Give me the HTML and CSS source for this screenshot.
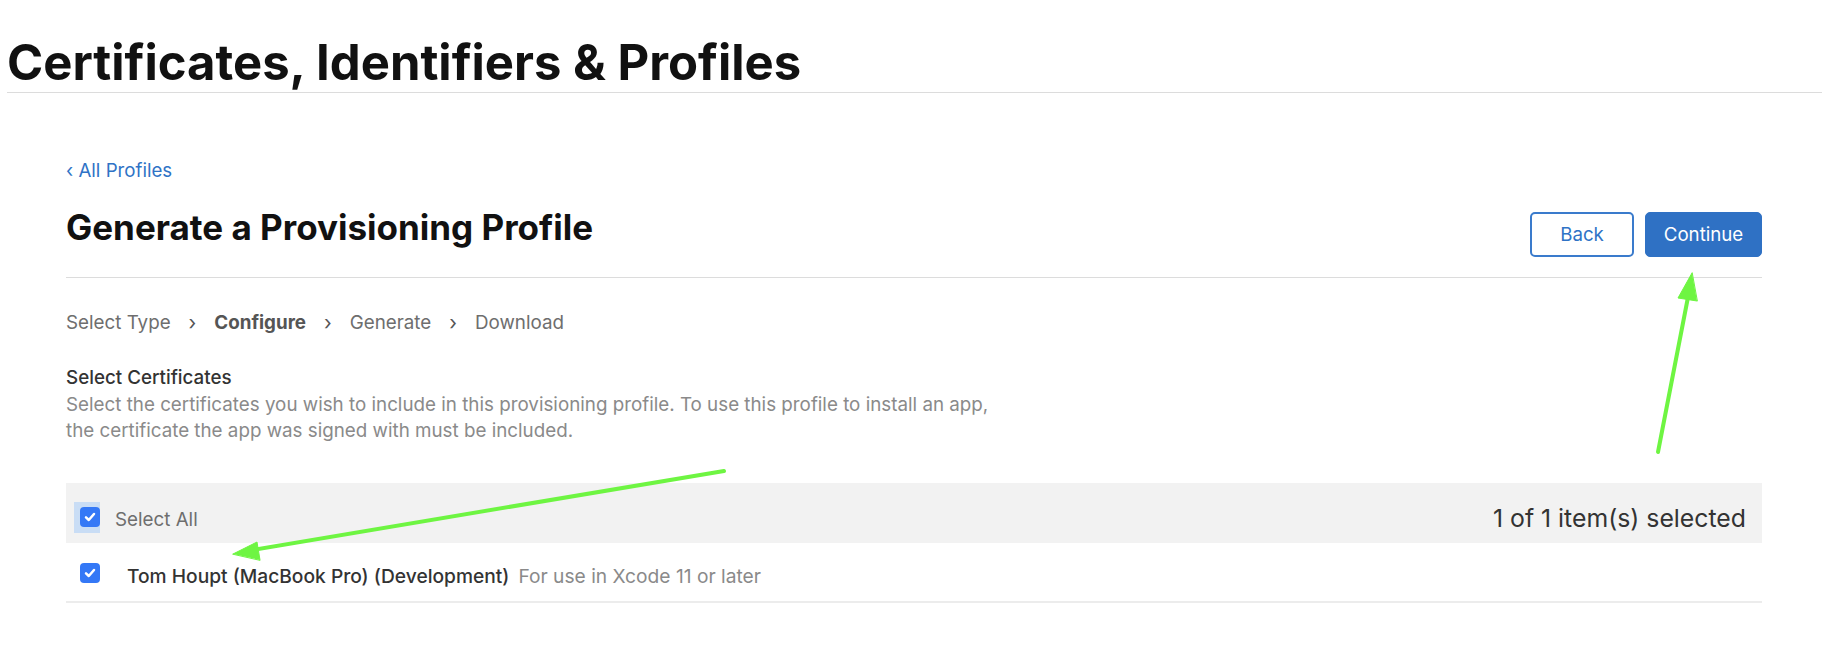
FILE: index.html
```html
<!DOCTYPE html>
<html lang="en">
<head>
<meta charset="utf-8">
<title>Certificates, Identifiers &amp; Profiles</title>
<link rel="stylesheet" href="styles.css">
</head>
<body>
<header class="page-header">
  <h1 class="page-title">Certificates, Identifiers &amp; Profiles</h1>
</header>
<main class="content">
  <a class="back-link" href="#"><span class="back-chevron">‹</span> All Profiles</a>
  <div class="heading-row">
    <h2 class="heading">Generate a Provisioning Profile</h2>
    <div class="actions">
      <button class="btn btn-outline">Back</button>
      <button class="btn btn-primary">Continue</button>
    </div>
  </div>
  <nav class="steps">
    <span class="step">Select Type</span>
    <span class="chev">›</span>
    <span class="step step-current">Configure</span>
    <span class="chev">›</span>
    <span class="step">Generate</span>
    <span class="chev">›</span>
    <span class="step">Download</span>
  </nav>
  <section class="section">
    <h3 class="section-title">Select Certificates</h3>
    <p class="section-desc">Select the certificates you wish to include in this provisioning profile. To use this profile to install an app,<br>the certificate the app was signed with must be included.</p>
  </section>
  <div class="table">
    <div class="table-head">
      <label class="select-all">
        <span class="focus-ring"><span class="checkbox"><svg viewBox="0 0 16 16" class="tick"><path d="M4 8.3 L6.8 11 L12 5" /></svg></span></span>
        <span class="select-all-label">Select All</span>
      </label>
      <span class="count">1 of 1 item(s) selected</span>
    </div>
    <div class="table-row">
      <span class="checkbox"><svg viewBox="0 0 16 16" class="tick"><path d="M4 8.3 L6.8 11 L12 5" /></svg></span>
      <span class="cert-name">Tom Houpt (MacBook Pro) (Development)</span>
      <span class="cert-note">For use in Xcode 11 or later</span>
    </div>
  </div>
</main>
<svg class="annotations" width="1822" height="652" viewBox="0 0 1822 652">
  <g stroke="#6ef542" stroke-width="4" fill="#6ef542" stroke-linecap="round">
    <line x1="1658" y1="452" x2="1689" y2="292" />
    <polygon points="1692,273 1678,298 1697,301" stroke-width="1" />
    <line x1="724" y1="471" x2="252" y2="550" />
    <polygon points="233,554 257,542 260,560" stroke-width="1" />
  </g>
</svg>
</body>
</html>
```
FILE: styles.css
```css
* { box-sizing: border-box; }
html, body { margin: 0; padding: 0; background: #fff; }
body {
  font-family: Inter, "Noto Sans", "Liberation Sans", sans-serif;
  color: #1d1d1f;
  position: relative;
  width: 1822px;
  height: 652px;
  overflow: hidden;
}
.page-header {
  margin-left: 7px;
  border-bottom: 1px solid #dcdcdc;
  height: 93px;
  padding-top: 34px;
}
.page-title {
  margin: 0;
  font-size: 49px;
  line-height: 58px;
  font-weight: 700;
  letter-spacing: 0;
  color: #111;
}
.content {
  margin-left: 66px;
  width: 1696px;
  padding-top: 66px;
}
.back-link {
  display: block;
  color: #2f73c6;
  text-decoration: none;
  font-size: 18.7px;
  line-height: 24px;
}
.heading-row {
  display: flex;
  justify-content: space-between;
  align-items: flex-start;
  border-bottom: 1px solid #dcdcdc;
  height: 95px;
}
.heading {
  margin: 23px 0 0;
  font-size: 35px;
  line-height: 42px;
  font-weight: 700;
  color: #111;
}
.actions { display: flex; gap: 11px; margin-top: 29px; }
.btn {
  font-family: inherit;
  font-size: 18.7px;
  height: 45px;
  border-radius: 5px;
  padding: 0;
  cursor: pointer;
}
.btn-outline {
  width: 104px;
  background: #fff;
  color: #2f73c6;
  border: 2px solid #3a7bcc;
}
.btn-primary {
  width: 117px;
  background: #2f71c4;
  color: #fff;
  border: 1px solid #2f71c4;
}
.steps {
  display: flex;
  align-items: center;
  gap: 18px;
  padding-top: 33px;
  font-size: 18.8px;
  line-height: 24px;
  color: #6e6e6e;
}
.chev { font-size: 20px; color: #555; }
.step-current { font-weight: 700; color: #555; }
.section { padding-top: 30px; }
.section-title {
  margin: 0;
  font-size: 18.8px;
  font-weight: 500;
  color: #333;
  line-height: 26px;
}
.section-desc {
  margin: 1px 0 0;
  font-size: 18.8px;
  color: #8a8a8a;
  line-height: 26px;
}
.table { margin-top: 39px; }
.table-head {
  display: flex;
  align-items: flex-start;
  justify-content: space-between;
  background: #f2f2f2;
  height: 60px;
  padding: 19px 16px 0 8px;
}
.select-all { display: flex; align-items: flex-start; }
.focus-ring {
  display: flex;
  padding: 5px 0 6px 6px;
  background: #c9ddf5;
  margin-right: 15px;
}
.checkbox {
  display: inline-flex;
  align-items: center;
  justify-content: center;
  width: 20px;
  height: 20px;
  background: #3478f6;
  border-radius: 4px;
  flex: none;
}
.tick { width: 16px; height: 16px; }
.tick path { fill: none; stroke: #fff; stroke-width: 2.5; stroke-linecap: round; stroke-linejoin: round; }
.select-all-label { font-size: 18.8px; line-height: 24px; margin-top: 6px; color: #6e6e6e; }
.count { font-size: 24.8px; line-height: 30px; margin-top: 1px; color: #333; }
.table-row {
  display: flex;
  align-items: flex-start;
  height: 60px;
  padding: 20px 0 0 14px;
  border-bottom: 2px solid #ececec;
}
.table-row .checkbox { margin-right: 27px; }
.cert-name { font-size: 19.2px; line-height: 24px; margin-top: 1px; font-weight: 500; color: #333; margin-right: 9px; }
.cert-note { font-size: 19.2px; line-height: 24px; margin-top: 1px; color: #8a8a8a; }
.annotations {
  position: absolute;
  left: 0;
  top: 0;
  pointer-events: none;
}
```
